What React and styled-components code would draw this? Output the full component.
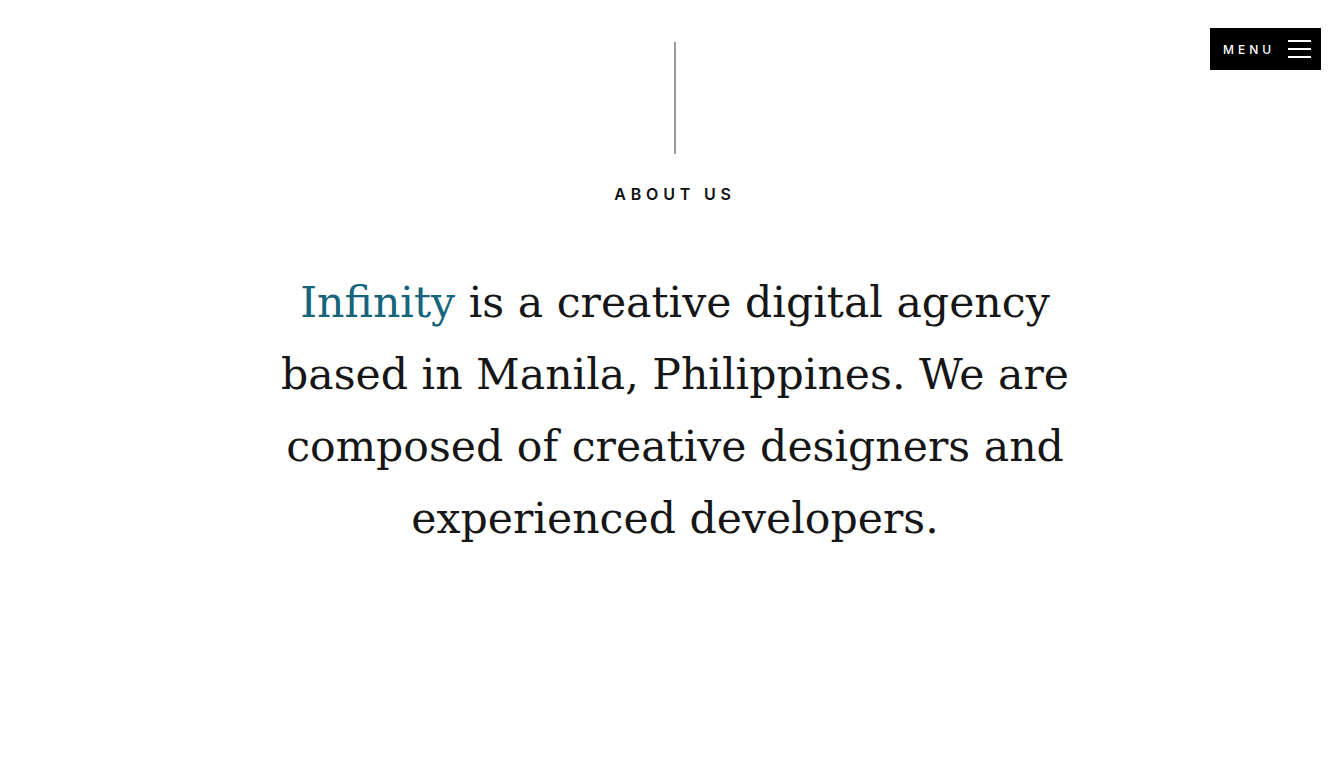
import React from "react";
import styled, { createGlobalStyle } from "styled-components";

const Global = createGlobalStyle`
  html, body { margin: 0; padding: 0; background: #fff; }
  body { font-family: "Liberation Serif", serif; }
`;

const Page = styled.div`
  position: relative;
  min-height: 767px;
  display: flex;
  flex-direction: column;
  align-items: center;
  padding-top: 42px;
  padding-left: 6px;
  box-sizing: border-box;
`;

const MenuButton = styled.button`
  position: absolute;
  top: 28px;
  right: 23px;
  width: 111px;
  height: 42px;
  background: #000;
  border: 0;
  display: flex;
  align-items: center;
  justify-content: space-between;
  padding: 0 10px 0 13px;
  box-sizing: border-box;
  cursor: pointer;
`;

const MenuLabel = styled.span`
  color: #fff;
  font-family: "Inter", "Liberation Sans", sans-serif;
  font-size: 12px;
  font-weight: 500;
  letter-spacing: 4px;
`;

const Burger = styled.span`
  display: flex;
  flex-direction: column;
  gap: 6px;
  width: 23px;
`;

const BurgerLine = styled.span`
  display: block;
  height: 2px;
  background: #fff;
`;

const Divider = styled.div`
  width: 2px;
  height: 112px;
  background: #9a9a9a;
`;

const Eyebrow = styled.h2`
  margin: 30px 0 0;
  font-family: "Inter", "Liberation Sans", sans-serif;
  font-size: 16px;
  font-weight: 600;
  letter-spacing: 4.8px;
  color: #111;
`;

const Lead = styled.p`
  margin: 62px 0 0;
  text-align: center;
  font-family: "DejaVu Serif", "Liberation Serif", serif;
  font-size: 42.6px;
  line-height: 72px;
  color: #161616;
  white-space: nowrap;
`;

const Brand = styled.span`
  color: #15657c;
`;

export default function App() {
  return (
    <>
      <Global />
      <Page>
        <MenuButton>
          <MenuLabel>MENU</MenuLabel>
          <Burger>
            <BurgerLine />
            <BurgerLine />
            <BurgerLine />
          </Burger>
        </MenuButton>
        <Divider />
        <Eyebrow>ABOUT US</Eyebrow>
        <Lead>
          <Brand>Infinity</Brand> is a creative digital agency
          <br />
          based in Manila, Philippines. We are
          <br />
          composed of creative designers and
          <br />
          experienced developers.
        </Lead>
      </Page>
    </>
  );
}
